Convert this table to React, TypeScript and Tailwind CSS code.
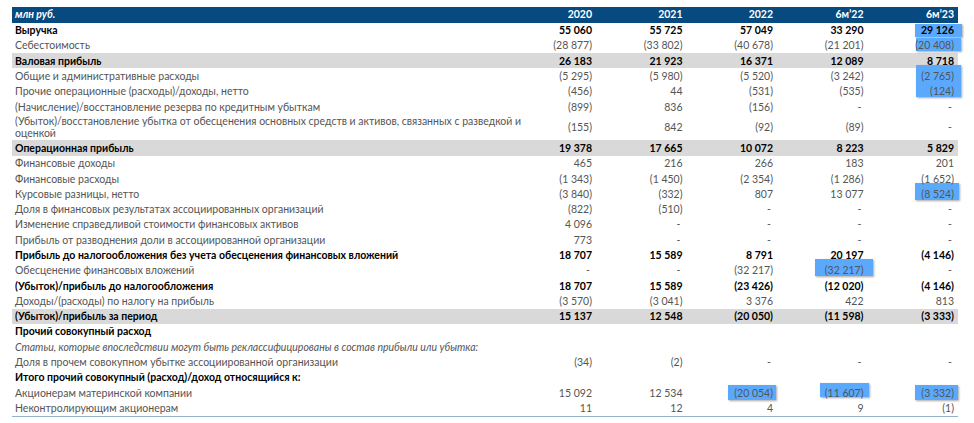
import React from "react";

type Kind = "normal" | "bold" | "gray" | "italic" | "double";
type Row = { label: React.ReactNode; vals?: string[]; kind: Kind };

const rows: Row[] = [
  { label: "Выручка", kind: "bold", vals: ["55 060", "55 725", "57 049", "33 290", "29 126"] },
  { label: "Себестоимость", kind: "normal", vals: ["(28 877)", "(33 802)", "(40 678)", "(21 201)", "(20 408)"] },
  { label: "Валовая прибыль", kind: "gray", vals: ["26 183", "21 923", "16 371", "12 089", "8 718"] },
  { label: "Общие и административные расходы", kind: "normal", vals: ["(5 295)", "(5 980)", "(5 520)", "(3 242)", "(2 765)"] },
  { label: "Прочие операционные (расходы)/доходы, нетто", kind: "normal", vals: ["(456)", "44", "(531)", "(535)", "(124)"] },
  { label: "(Начисление)/восстановление резерва по кредитным убыткам", kind: "normal", vals: ["(899)", "836", "(156)", "-", "-"] },
  {
    label: (
      <>
        (Убыток)/восстановление убытка от обесценения основных средств и активов, связанных с разведкой и
        <br />
        оценкой
      </>
    ),
    kind: "double",
    vals: ["(155)", "842", "(92)", "(89)", "-"],
  },
  { label: "Операционная прибыль", kind: "gray", vals: ["19 378", "17 665", "10 072", "8 223", "5 829"] },
  { label: "Финансовые доходы", kind: "normal", vals: ["465", "216", "266", "183", "201"] },
  { label: "Финансовые расходы", kind: "normal", vals: ["(1 343)", "(1 450)", "(2 354)", "(1 286)", "(1 652)"] },
  { label: "Курсовые разницы, нетто", kind: "normal", vals: ["(3 840)", "(332)", "807", "13 077", "(8 524)"] },
  { label: "Доля в финансовых результатах ассоциированных организаций", kind: "normal", vals: ["(822)", "(510)", "-", "-", "-"] },
  { label: "Изменение справедливой стоимости финансовых активов", kind: "normal", vals: ["4 096", "-", "-", "-", "-"] },
  { label: "Прибыль от разводнения доли в ассоциированной организации", kind: "normal", vals: ["773", "-", "-", "-", "-"] },
  { label: "Прибыль до налогообложения без учета обесценения финансовых вложений", kind: "bold", vals: ["18 707", "15 589", "8 791", "20 197", "(4 146)"] },
  { label: "Обесценение финансовых вложений", kind: "normal", vals: ["-", "-", "(32 217)", "(32 217)", "-"] },
  { label: "(Убыток)/прибыль до налогообложения", kind: "bold", vals: ["18 707", "15 589", "(23 426)", "(12 020)", "(4 146)"] },
  { label: "Доходы/(расходы) по налогу на прибыль", kind: "normal", vals: ["(3 570)", "(3 041)", "3 376", "422", "813"] },
  { label: "(Убыток)/прибыль за период", kind: "gray", vals: ["15 137", "12 548", "(20 050)", "(11 598)", "(3 333)"] },
  { label: "Прочий совокупный расход", kind: "bold" },
  { label: "Статьи, которые впоследствии могут быть реклассифицированы в состав прибыли или убытка:", kind: "italic" },
  { label: "Доля в прочем совокупном убытке ассоциированной организации", kind: "normal", vals: ["(34)", "(2)", "-", "-", "-"] },
  { label: "Итого прочий совокупный (расход)/доход относящийся к:", kind: "bold" },
  { label: "Акционерам материнской компании", kind: "normal", vals: ["15 092", "12 534", "(20 054)", "(11 607)", "(3 332)"] },
  { label: "Неконтролирующим акционерам", kind: "normal", vals: ["11", "12", "4", "9", "(1)"] },
];

const headers = ["2020", "2021", "2022", "6м’22", "6м’23"];

const cols = "grid grid-cols-[minmax(0,1fr)_90.5px_90.5px_90.5px_90.5px_90.5px] items-center";

function RowView({ row }: { row: Row }) {
  const isBold = row.kind === "bold" || row.kind === "gray";
  const rowCls =
    row.kind === "double"
      ? "h-[26px]"
      : row.kind === "gray"
      ? "h-[15.3px] bg-[#d9d9d9]"
      : "h-[15.3px]";
  const textCls = isBold ? "font-bold text-black" : "text-[#555555]";
  const labelCls = row.kind === "italic" ? "italic text-[#555555]" : textCls;
  return (
    <div className={`${cols} ${rowCls}`}>
      <div className={`pl-[3px] leading-[12px] whitespace-nowrap ${labelCls}`}>
        <span className="relative z-20">{row.label}</span>
      </div>
      {(row.vals ?? ["", "", "", "", ""]).map((v, i) => (
        <div key={i} className={`text-right leading-[12px] ${textCls} ${v === "-" ? "pr-[6px]" : "pr-[4px]"}`}>
          <span className="relative z-20">{v}</span>
        </div>
      ))}
    </div>
  );
}

export default function App() {
  return (
    <div className="w-[974px] h-[423px] bg-white overflow-hidden pt-[7px] pl-[12px] font-['Lato','Liberation_Sans',sans-serif] text-[10.5px]">
      <div className="relative w-[946px]">
        <div className={`${cols} h-[15.5px] bg-[#064a80] text-white font-bold`}>
          <div className="pl-[3px] italic">млн руб.</div>
          {headers.map((h) => (
            <div key={h} className="text-right pr-[4px]">
              {h}
            </div>
          ))}
        </div>
        <div className="border-b-[1.5px] border-[#95b1cd]">
          {rows.map((r, i) => (
            <RowView key={i} row={r} />
          ))}
        </div>

        {/* highlight boxes lying over the cells */}
        <div className="absolute z-10 left-[902.5px] top-[16.5px] w-[47.5px] h-[13px] bg-[#5aa9fc] shadow-[1px_1px_2px_rgba(0,0,0,0.35)]" />
        <div className="absolute z-10 left-[903.5px] top-[31px] w-[45.5px] h-[13px] bg-[#5aa9fc] shadow-[1px_1px_2px_rgba(0,0,0,0.35)]" />
        <div className="absolute z-10 left-[903.5px] top-[58px] w-[45.5px] h-[32px] bg-[#5aa9fc] shadow-[1px_1px_2px_rgba(0,0,0,0.35)]" />
        <div className="absolute z-10 left-[903px] top-[176px] w-[44px] h-[17px] bg-[#5aa9fc] shadow-[1px_1px_2px_rgba(0,0,0,0.35)]" />
        <div className="absolute z-10 left-[803px] top-[252px] w-[58px] h-[17px] bg-[#5aa9fc] shadow-[1px_1px_2px_rgba(0,0,0,0.35)]" />
        <div className="absolute z-10 left-[716px] top-[378px] w-[48px] h-[14.5px] bg-[#5aa9fc] shadow-[1px_1px_2px_rgba(0,0,0,0.35)]" />
        <div className="absolute z-10 left-[808px] top-[376px] w-[48.5px] h-[13.5px] bg-[#5aa9fc] shadow-[1px_1px_2px_rgba(0,0,0,0.35)]" />
        <div className="absolute z-10 left-[903px] top-[378px] w-[42.5px] h-[14.5px] bg-[#5aa9fc] shadow-[1px_1px_2px_rgba(0,0,0,0.35)]" />
      </div>
    </div>
  );
}
